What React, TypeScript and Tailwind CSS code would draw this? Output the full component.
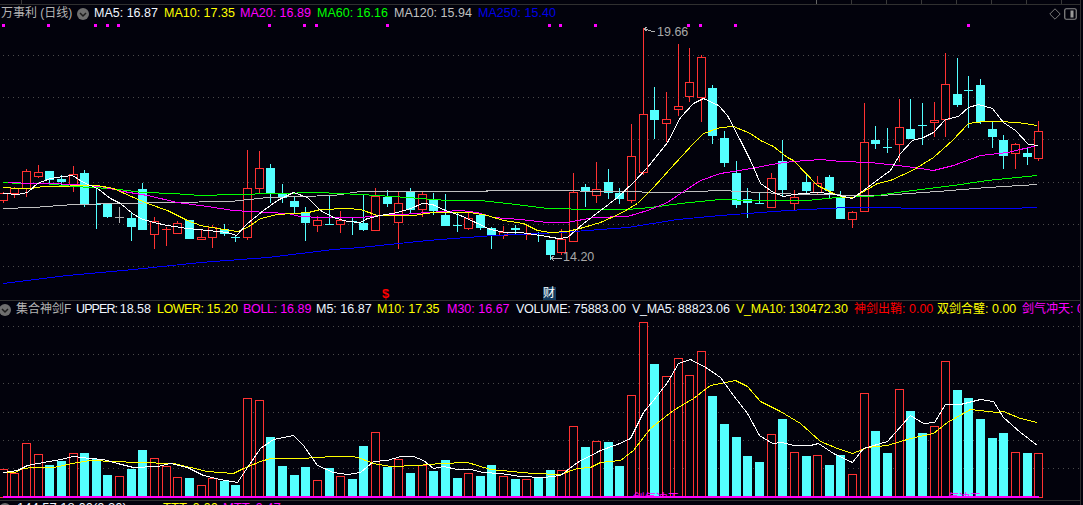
import React from "react";

type Kind = "r" | "c" | "g";
// high, body top, body bottom, low, colour
type Candle = [number, number, number, number, Kind];
type Pt = [number, number];

const CYAN = "#54ffff";
const RED = "#ff3232";
const BG = "#02020c";

const cx = (i: number) => Math.round(2.7 + 11.636 * i);

const candles: Candle[] = [
  [192, 193, 200, 203, "r"], [187, 188, 193, 198, "r"], [169, 171, 188, 197, "r"], [165, 172, 176, 178, "r"],
  [171, 171, 180, 185, "c"], [175, 179, 182, 187, "c"], [166, 174, 184, 192, "r"], [170, 173, 204, 207, "c"],
  [188, 204, 204, 229, "c"], [203, 204, 217, 218, "c"], [207, 217, 217, 223, "g"], [213, 218, 227, 241, "c"],
  [183, 189, 230, 230, "c"], [217, 221, 234, 249, "r"], [227, 229, 229, 246, "r"], [221, 223, 233, 234, "r"],
  [220, 220, 239, 239, "c"], [229, 237, 239, 239, "r"], [225, 227, 237, 248, "r"], [224, 229, 234, 236, "c"],
  [235, 237, 237, 242, "c"], [150, 188, 237, 240, "r"], [151, 168, 188, 193, "r"], [164, 168, 193, 203, "c"],
  [184, 194, 198, 203, "c"], [197, 201, 207, 213, "c"], [207, 212, 223, 241, "c"], [216, 220, 225, 232, "r"],
  [195, 224, 224, 225, "c"], [211, 220, 224, 233, "r"], [218, 221, 221, 235, "c"], [195, 223, 230, 231, "c"],
  [188, 196, 230, 231, "r"], [190, 197, 204, 207, "c"], [192, 203, 222, 249, "r"], [188, 191, 210, 214, "c"],
  [192, 194, 209, 217, "r"], [193, 199, 211, 215, "c"], [194, 215, 226, 226, "c"], [213, 225, 225, 232, "c"],
  [212, 218, 228, 230, "r"], [215, 215, 228, 230, "c"], [227, 228, 236, 249, "c"], [226, 232, 235, 239, "r"],
  [225, 228, 230, 234, "c"], [224, 234, 234, 240, "r"], [232, 233, 234, 242, "c"], [240, 240, 255, 260, "c"],
  [229, 239, 252, 255, "r"], [173, 192, 241, 242, "r"], [184, 187, 192, 207, "c"], [162, 189, 195, 203, "r"],
  [169, 182, 193, 199, "c"], [188, 193, 199, 204, "c"], [124, 156, 200, 203, "r"], [28, 114, 172, 175, "r"],
  [87, 110, 120, 139, "c"], [92, 119, 123, 142, "r"], [44, 106, 109, 116, "r"], [48, 82, 96, 102, "r"],
  [55, 57, 97, 122, "r"], [85, 88, 136, 144, "c"], [131, 138, 163, 167, "c"], [161, 173, 205, 208, "c"],
  [188, 199, 203, 218, "c"], [193, 203, 203, 203, "c"], [173, 178, 207, 207, "r"], [140, 161, 190, 196, "c"],
  [190, 197, 203, 210, "r"], [173, 182, 191, 193, "c"], [176, 183, 192, 194, "r"], [175, 177, 191, 198, "c"],
  [191, 198, 219, 219, "c"], [211, 212, 219, 228, "r"], [103, 142, 211, 211, "r"], [126, 140, 144, 149, "c"],
  [128, 147, 147, 153, "c"], [99, 127, 144, 162, "r"], [99, 129, 139, 139, "c"], [103, 125, 125, 145, "c"],
  [102, 120, 122, 137, "r"], [53, 84, 119, 137, "r"], [58, 94, 105, 107, "c"], [76, 90, 90, 128, "c"],
  [79, 85, 122, 124, "c"], [122, 129, 137, 148, "c"], [135, 140, 156, 169, "c"], [143, 144, 153, 169, "r"],
  [148, 153, 157, 165, "c"], [121, 131, 158, 161, "r"],
];

const volumes: [number, "r" | "c"][] = [
  [469, "r"], [473, "r"], [443, "r"], [454, "r"], [465, "c"], [461, "c"], [453, "r"], [453, "c"], [459, "c"], [475, "c"],
  [476, "r"], [469, "c"], [450, "c"], [458, "r"], [466, "r"], [477, "r"], [478, "c"], [485, "r"], [478, "r"], [481, "c"],
  [485, "c"], [398, "r"], [400, "r"], [437, "c"], [466, "c"], [475, "c"], [467, "c"], [480, "r"], [468, "c"], [476, "r"],
  [479, "c"], [446, "c"], [432, "r"], [467, "c"], [459, "r"], [473, "c"], [465, "r"], [471, "c"], [460, "c"], [478, "c"],
  [473, "r"], [476, "c"], [465, "c"], [476, "r"], [479, "c"], [479, "r"], [477, "c"], [470, "c"], [470, "r"], [426, "r"],
  [447, "c"], [441, "r"], [442, "c"], [466, "c"], [395, "r"], [322, "r"], [364, "c"], [376, "r"], [358, "r"], [375, "r"],
  [351, "r"], [396, "c"], [424, "c"], [437, "c"], [456, "c"], [462, "c"], [434, "r"], [419, "c"], [452, "r"], [456, "c"],
  [455, "r"], [465, "c"], [455, "c"], [474, "r"], [393, "r"], [431, "c"], [453, "c"], [389, "r"], [411, "c"], [433, "c"],
  [426, "r"], [361, "r"], [390, "c"], [398, "c"], [419, "c"], [438, "c"], [433, "c"], [452, "r"], [453, "c"], [453, "r"],
];

const ma5: Pt[] = [[3,193],[17,194],[27,192],[37,183],[50,178],[63,176],[72,175],[83,182],[97,188],[110,198],[120,203],[132,213],[140,218],[153,222],[167,225],[187,228],[207,230],[227,232],[236,235],[247,223],[263,210],[277,200],[293,192],[307,197],[320,210],[333,217],[347,221],[360,222],[367,218],[380,215],[397,212],[410,208],[422,203],[432,204],[445,210],[460,215],[475,222],[490,229],[505,232],[520,232],[540,235],[558,238],[567,237],[583,223],[600,210],[617,197],[633,182],[647,167],[667,142],[680,117],[693,103],[703,98],[718,105],[727,115],[740,140],[750,160],[760,183],[773,192],[783,196],[793,194],[803,193],[817,192],[830,193],[852,198],[867,187],[883,175],[890,170],[900,153],[912,140],[923,137],[933,132],[945,119],[958,116],[968,107],[978,104],[992,108],[1003,122],[1015,130],[1028,144],[1038,145]];
const ma10: Pt[] = [[3,187],[17,188],[30,188],[43,186],[60,186],[80,185],[97,185],[113,188],[133,197],[147,203],[167,210],[187,220],[200,225],[217,228],[237,231],[247,227],[260,218],[277,214],[293,213],[308,212],[320,209],[347,208],[360,209],[377,215],[393,215],[413,215],[433,212],[470,212],[487,215],[503,220],[523,223],[537,230],[550,232],[567,231],[583,227],[600,222],[620,213],[637,203],[653,187],[670,168],[693,143],[703,133],[720,127],[733,126],[750,133],[760,140],[773,146],[787,157],[793,160],[817,185],[833,193],[843,197],[853,197],[877,183],[890,180],[912,170],[933,157],[952,140],[968,123],[983,121],[997,121],[1017,122],[1037,125]];
const ma20: Pt[] = [[8,182],[33,183],[50,183],[73,184],[100,186],[123,191],[147,195],[177,202],[207,206],[233,210],[267,212],[287,213],[300,216],[320,217],[360,217],[390,214],[403,214],[427,212],[460,210],[477,212],[493,217],[520,219],[547,222],[567,222],[593,217],[627,216],[647,210],[667,202],[680,193],[700,180],[720,173],[745,169],[777,163],[793,161],[820,159],[840,161],[870,162],[897,165],[913,167],[933,170],[953,165],[980,155],[1007,152],[1037,145]];
const ma60: Pt[] = [[3,182],[20,183],[43,183],[73,186],[110,188],[143,192],[173,193],[200,195],[233,194],[277,193],[317,192],[360,194],[393,196],[447,200],[480,200],[507,203],[547,208],[593,209],[627,209],[650,207],[680,203],[720,199],[753,200],[807,200],[837,197],[870,196],[897,192],[953,185],[987,180],[1037,175]];
const ma120: Pt[] = [[3,208],[33,207],[73,204],[120,203],[167,202],[230,201],[267,197],[300,196],[333,195],[360,191],[427,191],[547,190],[673,192],[720,190],[760,192],[800,194],[880,195],[937,191],[987,187],[1037,184]];
const ma250: Pt[] = [[3,283],[67,275],[133,269],[200,262],[267,257],[333,249],[360,247],[427,240],[493,235],[560,232],[627,227],[677,219],[720,215],[787,210],[847,207],[893,207],[907,208],[1007,208],[1037,207]];

const volM5: Pt[] = [[3,472],[17,470],[27,465],[43,462],[60,459],[73,456],[90,458],[103,459],[117,463],[133,467],[157,466],[170,463],[187,467],[203,475],[220,479],[237,482],[247,467],[260,448],[273,439],[293,435],[303,445],[317,465],[333,472],[347,474],[360,472],[373,461],[387,460],[400,456],[413,456],[423,460],[433,468],[443,466],[457,469],[470,469],[483,472],[500,473],[520,476],[543,477],[560,475],[577,462],[600,450],[617,444],[630,438],[643,412],[657,395],[667,382],[678,363],[690,359],[707,368],[720,377],[733,395],[747,413],[759,435],[772,443],[782,442],[793,445],[810,445],[818,443],[833,453],[852,462],[863,448],[887,441],[910,415],[923,423],[934,422],[945,404],[960,404],[980,399],[993,401],[1003,417],[1020,432],[1037,445]];
const volM10: Pt[] = [[3,472],[15,472],[22,468],[33,467],[53,467],[77,462],[90,460],[137,462],[173,463],[190,467],[207,471],[233,473],[243,468],[260,461],[270,458],[300,458],[333,456],[353,456],[360,458],[373,463],[390,466],[417,465],[440,463],[467,462],[490,469],[533,473],[560,474],[577,468],[590,467],[600,462],[620,460],[633,450],[650,428],[660,420],[673,410],[693,398],[710,385],[720,383],[735,380],[747,386],[760,401],[780,411],[800,423],[820,441],[837,448],[852,453],[867,447],[887,445],[910,438],[933,433],[947,422],[970,409],[997,412],[1003,411],[1020,418],[1037,422]];

const signalDots = [3, 48, 95, 107, 118, 269, 304, 316, 387, 549, 560, 595, 688, 700, 735, 968];
const mainGrid = [55, 97, 139, 182, 224, 266];
const volGrid = [326, 354, 383, 412, 440, 468];
const rulerTicks = [851, 886, 921, 956, 991, 1026, 1061];

const line = (pts: Pt[]) => pts.map(([x, y]) => `${x + 0.5},${y + 0.5}`).join(" ");

const Curve = ({ pts, color }: { pts: Pt[]; color: string }) => (
  <polyline points={line(pts)} fill="none" stroke={color} strokeWidth="1" />
);

const GridLines = ({ ys }: { ys: number[] }) => (
  <>
    {ys.map((y) => (
      <line key={y} x1="3" x2="1080" y1={y + 0.5} y2={y + 0.5} stroke="#4a4a4a" strokeDasharray="1 4" />
    ))}
  </>
);

const Chevron = ({ className }: { className: string }) => (
  <svg width="12" height="12" viewBox="0 0 12 12" className={className}>
    <circle cx="6" cy="6" r="6" fill="#6e6e6e" />
    <path d="M3 5l3 3 3-3" fill="none" stroke="#1c1c1c" strokeWidth="1.5" />
  </svg>
);

const CandleMark = ({ c, i }: { c: Candle; i: number }) => {
  const [high, top, bottom, low, kind] = c;
  const x = cx(i);
  const color = kind === "c" ? CYAN : kind === "g" ? "#b0b0b0" : RED;
  const flat = bottom - top < 2;
  return (
    <g>
      <line x1={x + 0.5} x2={x + 0.5} y1={high} y2={low} stroke={color} />
      {flat ? (
        <rect x={x - 4} y={top} width="9" height="1" fill={color} />
      ) : kind === "c" ? (
        <rect x={x - 4} y={top} width="9" height={bottom - top} fill={color} />
      ) : (
        <rect x={x - 3.5} y={top + 0.5} width="8" height={bottom - top} fill={BG} stroke={color} />
      )}
    </g>
  );
};

const MainChart = () => (
  <div className="relative h-[278px]">
    <svg width="1081" height="278" viewBox="0 22 1081 278" shapeRendering="crispEdges" className="block">
      <GridLines ys={mainGrid} />
      {signalDots.map((x) => (
        <rect key={x} x={x - 1} y="24" width="3" height="3" fill="#ff00ff" />
      ))}
      {candles.map((c, i) => (
        <CandleMark key={i} c={c} i={i} />
      ))}
      <Curve pts={ma250} color="#0000ff" />
      <Curve pts={ma120} color="#c0c0c0" />
      <Curve pts={ma60} color="#00ff00" />
      <Curve pts={ma20} color="#ff00ff" />
      <Curve pts={ma10} color="#ffff00" />
      <Curve pts={ma5} color="#ffffff" />
      {/* high / low arrows */}
      <path d="M655 32L644 29M644 29l3-2M644 29l3 2" fill="none" stroke="#b0b0b0" />
      <path d="M562 258H551M551 258l3-2M551 258l3 3" fill="none" stroke="#b0b0b0" />
    </svg>
    <span className="absolute left-[657px] top-[3px] text-[12.5px] leading-[14px] text-[#a8a8a8]">19.66</span>
    <span className="absolute left-[563px] top-[228px] text-[12.5px] leading-[14px] text-[#a8a8a8]">14.20</span>
    <span className="absolute left-[382px] top-[265px] text-[13px] leading-[14px] font-bold text-[#ff0000]">$</span>
    <span className="absolute left-[543px] top-[265px] h-[13px] w-[13px] bg-[#123a5e] text-[12px] leading-[13px] text-white">财</span>
  </div>
);

const VolumeChart = () => (
  <div className="relative h-[182px]">
    <svg width="1081" height="182" viewBox="0 318 1081 182" shapeRendering="crispEdges" className="block">
      <GridLines ys={volGrid} />
      {volumes.map(([top, kind], i) =>
        kind === "c" ? (
          <rect key={i} x={cx(i) - 4} y={top} width="9" height={497 - top} fill={CYAN} />
        ) : (
          <rect key={i} x={cx(i) - 3.5} y={top + 0.5} width="8" height={497 - top} fill={BG} stroke={RED} />
        ),
      )}
      <Curve pts={volM10} color="#ffff00" />
      <Curve pts={volM5} color="#ffffff" />
      <rect x="3" y="496" width="1036" height="2" fill="#ff00ff" />
    </svg>
    <span className="absolute left-[633px] top-[173px] h-[6px] w-[46px] overflow-hidden text-[11.5px] leading-[14px] text-[#ff00ff]">剑气冲天</span>
    <span className="absolute left-[948px] top-[173px] h-[6px] w-[33px] overflow-hidden text-[11px] leading-[14px] text-[#ff00ff]">气冲天</span>
  </div>
);

export default function App() {
  return (
    <div className="relative h-[505px] w-[1083px] overflow-hidden bg-[#02020c] font-['Liberation_Sans','Noto_Sans_CJK_SC',sans-serif]">
      <div className="w-[1081px] border-r border-[#2e2e2e]">
        {/* top ruler */}
        <svg width="1081" height="5" className="block" shapeRendering="crispEdges">
          <line x1="0" x2="1081" y1="4.5" y2="4.5" stroke="#303030" />
          <line x1="21.5" x2="21.5" y1="0" y2="4" stroke="#3a3a3a" />
          <line x1="816.5" x2="816.5" y1="0" y2="4" stroke="#666" />
          {rulerTicks.map((x) => (
            <line key={x} x1={x + 0.5} x2={x + 0.5} y1="0" y2="4" stroke="#3a3a3a" />
          ))}
        </svg>

        {/* main legend */}
        <div className="flex h-[17px] items-center whitespace-nowrap text-[12.5px] leading-[17px]">
          <span className="ml-[1px] w-[76px] text-[12px] text-[#b4b4b4]">万事利 (日线)</span>
          <Chevron className="mr-[5px] shrink-0" />
          <span className="w-[70px] text-[#f0f6ff]">MA5: 16.87</span>
          <span className="w-[76px] text-[#ffff00]">MA10: 17.35</span>
          <span className="w-[77px] text-[#ff00ff]">MA20: 16.89</span>
          <span className="w-[77px] text-[#00ff00]">MA60: 16.16</span>
          <span className="w-[84px] text-[#c0c0c0]">MA120: 15.94</span>
          <span className="text-[#0000e6]">MA250: 15.40</span>
          <svg width="12" height="12" viewBox="0 0 12 12" className="ml-auto mr-[3px]" fill="none" stroke="#7a7a7a">
            <path d="M6 .8L11.2 6 6 11.2.8 6z" />
          </svg>
          <svg width="13" height="12" viewBox="0 0 13 12" className="mr-[3px]" fill="none">
            <rect x=".75" y=".75" width="11.5" height="10.5" rx="1.5" stroke="#8a8a8a" strokeWidth="1.2" />
            <rect x="6.5" y="2.5" width="3" height="7" fill="#9a9a9a" />
          </svg>
        </div>

        <MainChart />

        {/* indicator legend */}
        <div className="flex h-[18px] items-center overflow-hidden whitespace-nowrap border-t border-[#303030] text-[12.5px] leading-[17px]">
          <Chevron className="-ml-[1px] mr-[5px] shrink-0" />
          <span className="w-[60px] shrink-0 text-[12px] text-[#b4b4b4]">集合神剑F</span>
          <span className="w-[81px] shrink-0 text-[#f0f6ff]"><span className="tracking-[-0.9px]">UPPER: </span>18.58</span>
          <span className="w-[86px] shrink-0 text-[#ffff00]"><span className="tracking-[-0.45px]">LOWER: </span>15.20</span>
          <span className="w-[73px] shrink-0 text-[#ff00ff]"><span className="tracking-[-0.3px]">BOLL: </span>16.89</span>
          <span className="w-[61px] shrink-0 text-[#f0f6ff]">M5: 16.87</span>
          <span className="w-[70px] shrink-0 text-[#ffff00]">M10: 17.35</span>
          <span className="w-[69px] shrink-0 text-[#ff00ff]">M30: 16.67</span>
          <span className="w-[116px] shrink-0 text-[#f0f6ff]"><span className="tracking-[-0.25px]">VOLUME: </span>75883.00</span>
          <span className="w-[104px] shrink-0 text-[#f0f6ff]"><span className="tracking-[-0.3px]">V_MA5: </span>88823.06</span>
          <span className="w-[118px] shrink-0 text-[#ffff00]"><span className="tracking-[-0.25px]">V_MA10: </span>130472.30</span>
          <span className="w-[83px] shrink-0 text-[#ff0000]"><span className="text-[12px]">神剑出鞘</span>: 0.00</span>
          <span className="w-[85px] shrink-0 text-[#ffff00]"><span className="text-[12px]">双剑合璧</span>: 0.00</span>
          <span className="shrink-0 text-[#ff00ff]"><span className="text-[12px]">剑气冲天</span>: 0.00</span>
        </div>

        <VolumeChart />

        {/* next indicator row, cut off by the window */}
        <div className="flex h-[5px] items-start overflow-hidden whitespace-nowrap border-t border-[#303030] text-[13px] leading-[14px]">
          <Chevron className="ml-[-1px] mr-[5px] mt-[2px] shrink-0" />
          <span className="ml-[1px] w-[146px] text-[#f0f6ff]">144.57 18.00(0.30)</span>
          <span className="w-[60px] text-[#ffff00]">TTT: 0.00</span>
          <span className="w-[70px] text-[#ff00ff]">MTT: 0.47</span>
        </div>
      </div>
    </div>
  );
}
